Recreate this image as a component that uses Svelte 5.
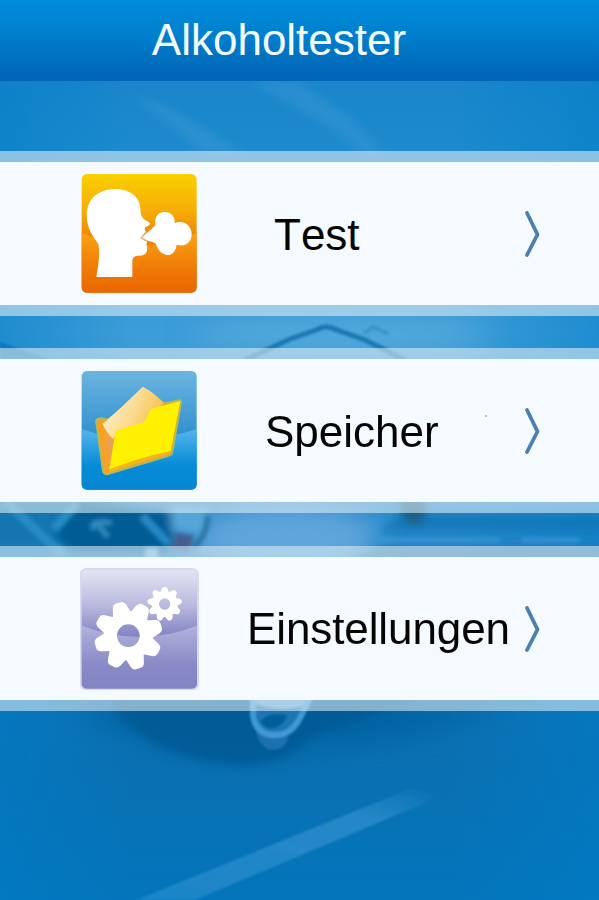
<script lang="ts">
  interface MenuItem {
    id: string;
    label: string;
  }

  const items: MenuItem[] = [
    { id: "test", label: "Test" },
    { id: "speicher", label: "Speicher" },
    { id: "einstellungen", label: "Einstellungen" },
  ];

  const bigTeeth = [-17, 28, 73, 118, 163, 208, 253, 298];
  const smallTeeth = [0, 40, 80, 120, 160, 200, 240, 280, 320];
</script>

<div class="screen">
  <!-- Blurred car backdrop -->
  <svg class="backdrop" viewBox="0 0 599 900" aria-hidden="true">
    <defs>
      <linearGradient id="sky" x1="0" y1="0" x2="0" y2="1">
        <stop offset="0" stop-color="#1680c8" />
        <stop offset=".16" stop-color="#1c8acd" />
        <stop offset=".2" stop-color="#2c8fcf" />
        <stop offset=".37" stop-color="#3c9dd7" />
        <stop offset=".59" stop-color="#2b8acb" />
        <stop offset=".72" stop-color="#0c73b6" />
        <stop offset=".85" stop-color="#0970b2" />
        <stop offset="1" stop-color="#0375bb" />
      </linearGradient>
      <linearGradient id="edges">
        <stop offset="0" stop-color="#007dc8" stop-opacity=".5" />
        <stop offset=".22" stop-color="#007dc8" stop-opacity="0" />
        <stop offset=".75" stop-color="#007dc8" stop-opacity="0" />
        <stop offset="1" stop-color="#007dc8" stop-opacity=".5" />
      </linearGradient>
      <linearGradient id="beam" x1="0" y1="1" x2="1" y2="0">
        <stop offset="0" stop-color="#2189cc" stop-opacity=".8" />
        <stop offset=".75" stop-color="#2b8bc8" stop-opacity=".9" />
        <stop offset="1" stop-color="#2b8bc8" stop-opacity="0" />
      </linearGradient>
      <filter id="soft1" x="-20%" y="-20%" width="140%" height="140%"><feGaussianBlur stdDeviation="1.3" /></filter>
      <filter id="soft2" x="-20%" y="-20%" width="140%" height="140%"><feGaussianBlur stdDeviation="2.2" /></filter>
      <filter id="soft4" x="-30%" y="-50%" width="160%" height="200%"><feGaussianBlur stdDeviation="4" /></filter>
      <filter id="soft14" x="-50%" y="-50%" width="200%" height="200%"><feGaussianBlur stdDeviation="14" /></filter>
    </defs>
    <rect width="599" height="900" fill="url(#sky)" />
    <rect width="599" height="900" fill="url(#edges)" />

    <!-- light streaks -->
    <g filter="url(#soft4)" fill="#4fa3d6">
      <path d="M135 96L172 110L245 154L205 154Z" opacity=".3" />
      <path d="M250 81L298 81L350 118L385 154L365 154L322 122Z" opacity=".28" />
    </g>

    <!-- roof line -->
    <g filter="url(#soft14)">
      <ellipse cx="340" cy="335" rx="150" ry="18" fill="#64b0dc" opacity=".6" />
      <ellipse cx="285" cy="540" rx="95" ry="36" fill="#67a9dd" opacity=".9" />
    </g>
    <g filter="url(#soft1)" fill="none">
      <path d="M245 360L290 339L316 330Q326 324 337 330L365 340L405 360" stroke="#1f78b2" stroke-width="5" />
      <path d="M364 333L374 327L388 334" stroke="#388ec5" stroke-width="4" opacity=".7" />
      <path d="M0 342Q20 350 48 359L0 359Z" fill="#0877b8" />
    </g>

    <!-- headlight and grille -->
    <g filter="url(#soft4)">
      <path d="M-5 500H85L58 548L-5 548Z" fill="#1375ae" />
      <path d="M80 500L185 514L168 552L70 552L55 535Z" fill="#005b94" />
      <path d="M170 505L209 507L204 534L172 532Z" fill="#54a6d8" />
      <path d="M400 513H610V532H380Z" fill="#1277b6" opacity=".8" />
      <path d="M398 500H424L427 516L416 526L404 520Z" fill="#1c5f85" />
      <path d="M380 546H610V560H350Z" fill="#2c75a6" opacity=".7" />
    </g>
    <g filter="url(#soft2)" fill="none">
      <path d="M5 500Q38 533 66 558" stroke="#268cc3" stroke-width="9" />
      <path d="M77 503L54 529" stroke="#268cc3" stroke-width="9" />
      <path d="M94 530Q90 521 103 522L112 523M98 525L108 537" stroke="#3289bd" stroke-width="6" />
      <path d="M142 516L169 544" stroke="#2888c4" stroke-width="9" />
      <path d="M208 516Q206 538 193 547" stroke="#256f9e" stroke-width="5" />
      <path d="M170 548L176 533L194 535L188 552Z" fill="#435f93" />
      <path d="M370 540H500M522 540H580" stroke="#3795d3" stroke-width="4" />
      <path d="M145 554H158" stroke="#6cb5df" stroke-width="12" />
    </g>

    <!-- bumper shadow -->
    <g filter="url(#soft14)">
      <path d="M70 700H520L400 738L300 750Q160 765 70 700Z" fill="#075f9d" opacity=".85" />
    </g>
    <g filter="url(#soft4)">
      <path d="M110 700H420L310 736Q285 771 225 764Q140 754 110 700Z" fill="#005b94" opacity=".85" />
    </g>
    <g filter="url(#soft1)">
      <path d="M256 731H289Q288 750 273 750Q259 749 256 731Z" fill="#1b70ad" />
      <path d="M253 698L253 716Q256 734 273 735Q291 736 300 718L310 698" fill="#1a76b4" stroke="#4199d5" stroke-width="6" />
      <path d="M260 722Q268 711 287 715Q282 730 267 728Z" fill="#045d99" />
      <path d="M255 690H310L303 706Q280 712 256 704Z" fill="#5fa5d4" />
    </g>
    <path d="M136 900L410 789Q425 788 434 796L425 803L195 900Z" fill="url(#beam)" filter="url(#soft1)" />
  </svg>

  <header>
    <h1>Alkoholtester</h1>
  </header>

  <nav>
    {#each items as item (item.id)}
      <button class="row {item.id}">
        <svg class="icon" viewBox="30 24 360 366" aria-hidden="true">
          {#if item.id === "test"}
            <defs>
              <linearGradient id="orangeTop" x1="0" y1="0" x2="0" y2="1">
                <stop offset="0" stop-color="#fbd000" />
                <stop offset=".3" stop-color="#f6ae06" />
                <stop offset=".55" stop-color="#ec8208" />
              </linearGradient>
              <linearGradient id="orangeLow" x1="0" y1="0" x2="0" y2="1">
                <stop offset="0" stop-color="#f9a312" />
                <stop offset=".5" stop-color="#f18008" />
                <stop offset="1" stop-color="#ea6500" />
              </linearGradient>
            </defs>
            <rect x="35" y="27" width="345" height="356" rx="16" fill="url(#orangeTop)" />
            <path d="M35 204Q208 278 380 204V367Q380 383 364 383H51Q35 383 35 367Z" fill="url(#orangeLow)" />
            <path
              d="M79 336C84 305 91 270 85 237C70 215 51 194 50 151C51 96 91 72 137 72C181 73 209 95 211 130C212 145 213 153 220 161L240 174Q242 180 225 187Q222 194 228 201L214 219L232 229L229 240Q234 246 231 257Q227 272 208 272Q188 271 187 286V336Z"
              fill="#fff"
            />
            <path
              d="M214 219L236 199Q245 193 256 181C253 156 264 141 284 141C304 141 316 155 314 175C335 163 365 178 365 207C365 235 343 247 320 239C317 257 308 270 293 270C275 269 260 252 259 237Q248 229 236 228Z"
              fill="#fff"
            />
            <path d="M228 201L214 219L232 229" fill="none" stroke="#e9aa83" stroke-width="4" />
          {:else if item.id === "speicher"}
            <defs>
              <linearGradient id="blueTop" x1="0" y1="0" x2="0" y2="1">
                <stop offset="0" stop-color="#6bb5e1" />
                <stop offset=".55" stop-color="#3190cd" />
              </linearGradient>
              <linearGradient id="blueLow" x1="0" y1="0" x2="0" y2="1">
                <stop offset="0" stop-color="#53b5eb" />
                <stop offset=".6" stop-color="#078bd7" />
                <stop offset="1" stop-color="#0586d0" />
              </linearGradient>
              <linearGradient id="paper" x1="0" y1=".3" x2="1" y2=".7">
                <stop offset="0" stop-color="#fff1cf" />
                <stop offset=".5" stop-color="#fbda91" />
                <stop offset="1" stop-color="#f8b83a" />
              </linearGradient>
            </defs>
            <rect x="35" y="27" width="345" height="356" rx="16" fill="url(#blueTop)" />
            <path d="M35 202Q208 258 380 202V367Q380 383 364 383H51Q35 383 35 367Z" fill="url(#blueLow)" />
            <path
              d="M78 177Q79 169 94 168L114 172L218 100L284 123L329 114Q335 116 333 124L307 272Q305 280 291 283L111 337Q100 338 98 324Z"
              fill="#f6a323"
              stroke="#a9bd64"
              stroke-width="5"
              stroke-linejoin="round"
            />
            <path d="M98 186Q160 132 218 74Q249 89 280 121L275 140L222 190L140 210L130 232Q112 216 98 186Z" fill="url(#paper)" />
            <path d="M106 213L132 237L114 327Z" fill="#efa04e" />
            <path d="M137 206Q180 191 216 184Q231 176 240 142L275 132L331 117L302 268Q206 298 118 322Z" fill="#fff100" />
            <path d="M118 322Q210 286 302 267L300 274L114 332Z" fill="#f3b51b" />
          {:else}
            <defs>
              <linearGradient id="violetTop" x1="0" y1="0" x2="0" y2="1">
                <stop offset="0" stop-color="#e4e6f4" />
                <stop offset=".3" stop-color="#b9bade" />
                <stop offset=".56" stop-color="#8283c3" />
              </linearGradient>
              <linearGradient id="violetLow" x1="0" y1="0" x2="0" y2="1">
                <stop offset="0" stop-color="#b1b2dc" />
                <stop offset=".65" stop-color="#8889c6" />
                <stop offset="1" stop-color="#8384c3" />
              </linearGradient>
            </defs>
            <rect x="32" y="27" width="352" height="362" rx="18" fill="url(#violetTop)" stroke="#d8d9ee" stroke-width="6" />
            <path d="M36 197Q208 264 381 197V367Q381 384 364 384H53Q36 384 36 367Z" fill="url(#violetLow)" />
            <circle cx="175" cy="227" r="54" fill="none" stroke="#fff" stroke-width="40" />
            {#each bigTeeth as angle}
              <path d="M-29 -62L-21 -91Q-17 -103 -7 -103H7Q17 -103 21 -91L29 -62Z" fill="#fff" transform="translate(175 227) rotate({angle})" />
            {/each}
            <circle cx="284" cy="132" r="28" fill="none" stroke="#fff" stroke-width="22" />
            {#each smallTeeth as angle}
              <path d="M-13 -33L-8 -47Q-6 -52 0 -52Q6 -52 8 -47L13 -33Z" fill="#fff" transform="translate(284 132) rotate({angle})" />
            {/each}
          {/if}
        </svg>
        <span class="label">{item.label}</span>
        {#if item.id === "speicher"}
          <i class="speck"></i>
        {/if}
        <svg class="chevron" viewBox="0 0 18 50" aria-hidden="true">
          <path d="M3 4L13.5 25.5L3 46" />
        </svg>
      </button>
    {/each}
  </nav>
</div>

<style>
  :global(body) {
    margin: 0;
  }

  .screen {
    position: relative;
    width: 599px;
    height: 900px;
    overflow: hidden;
    font-family: "Liberation Sans", Arial, sans-serif;
  }

  .backdrop {
    position: absolute;
    inset: 0;
    width: 599px;
    height: 900px;
  }

  header {
    position: relative;
    height: 81px;
    box-sizing: border-box;
    padding-right: 41px;
    display: flex;
    justify-content: center;
    background: linear-gradient(#008cdb, #007fce 45%, #0069b9 85%, #0065b5);
  }

  h1 {
    margin: 0;
    color: #f3fcff;
    font-size: 44px;
    font-weight: 400;
    line-height: 79px;
  }

  nav {
    position: relative;
    display: flex;
    flex-direction: column;
    gap: 32px;
    padding-top: 70px;
  }

  .row {
    display: flex;
    align-items: center;
    box-sizing: border-box;
    width: 100%;
    height: 165px;
    padding: 0 57px 0 80px;
    border: 0 solid rgba(226, 238, 244, 0.58);
    border-width: 11px 0;
    background: #f4faff;
    background-clip: padding-box;
    color: #050505;
    font: inherit;
    font-size: 44px;
    text-align: left;
  }

  .einstellungen {
    margin-top: 1px;
  }

  .icon {
    flex: none;
    width: 120px;
    height: 122px;
  }

  .label {
    padding-top: 2px;
    font-kerning: none;
    line-height: 50px;
    white-space: nowrap;
  }

  .test .label {
    margin-left: 74px;
  }

  .speicher .label {
    margin-left: 65px;
  }

  .einstellungen .label {
    margin-left: 47px;
    padding-top: 0;
    letter-spacing: -0.1px;
  }

  /* tiny mark between label and arrow */
  .speck {
    width: 2px;
    height: 2px;
    margin: 0 0 30px 46px;
    background: #b9bec2;
  }

  .chevron {
    flex: none;
    width: 18px;
    height: 50px;
    margin-left: auto;
  }

  .chevron path {
    fill: none;
    stroke: #4c7fae;
    stroke-width: 3.8;
    stroke-linecap: round;
    stroke-linejoin: round;
  }
</style>
